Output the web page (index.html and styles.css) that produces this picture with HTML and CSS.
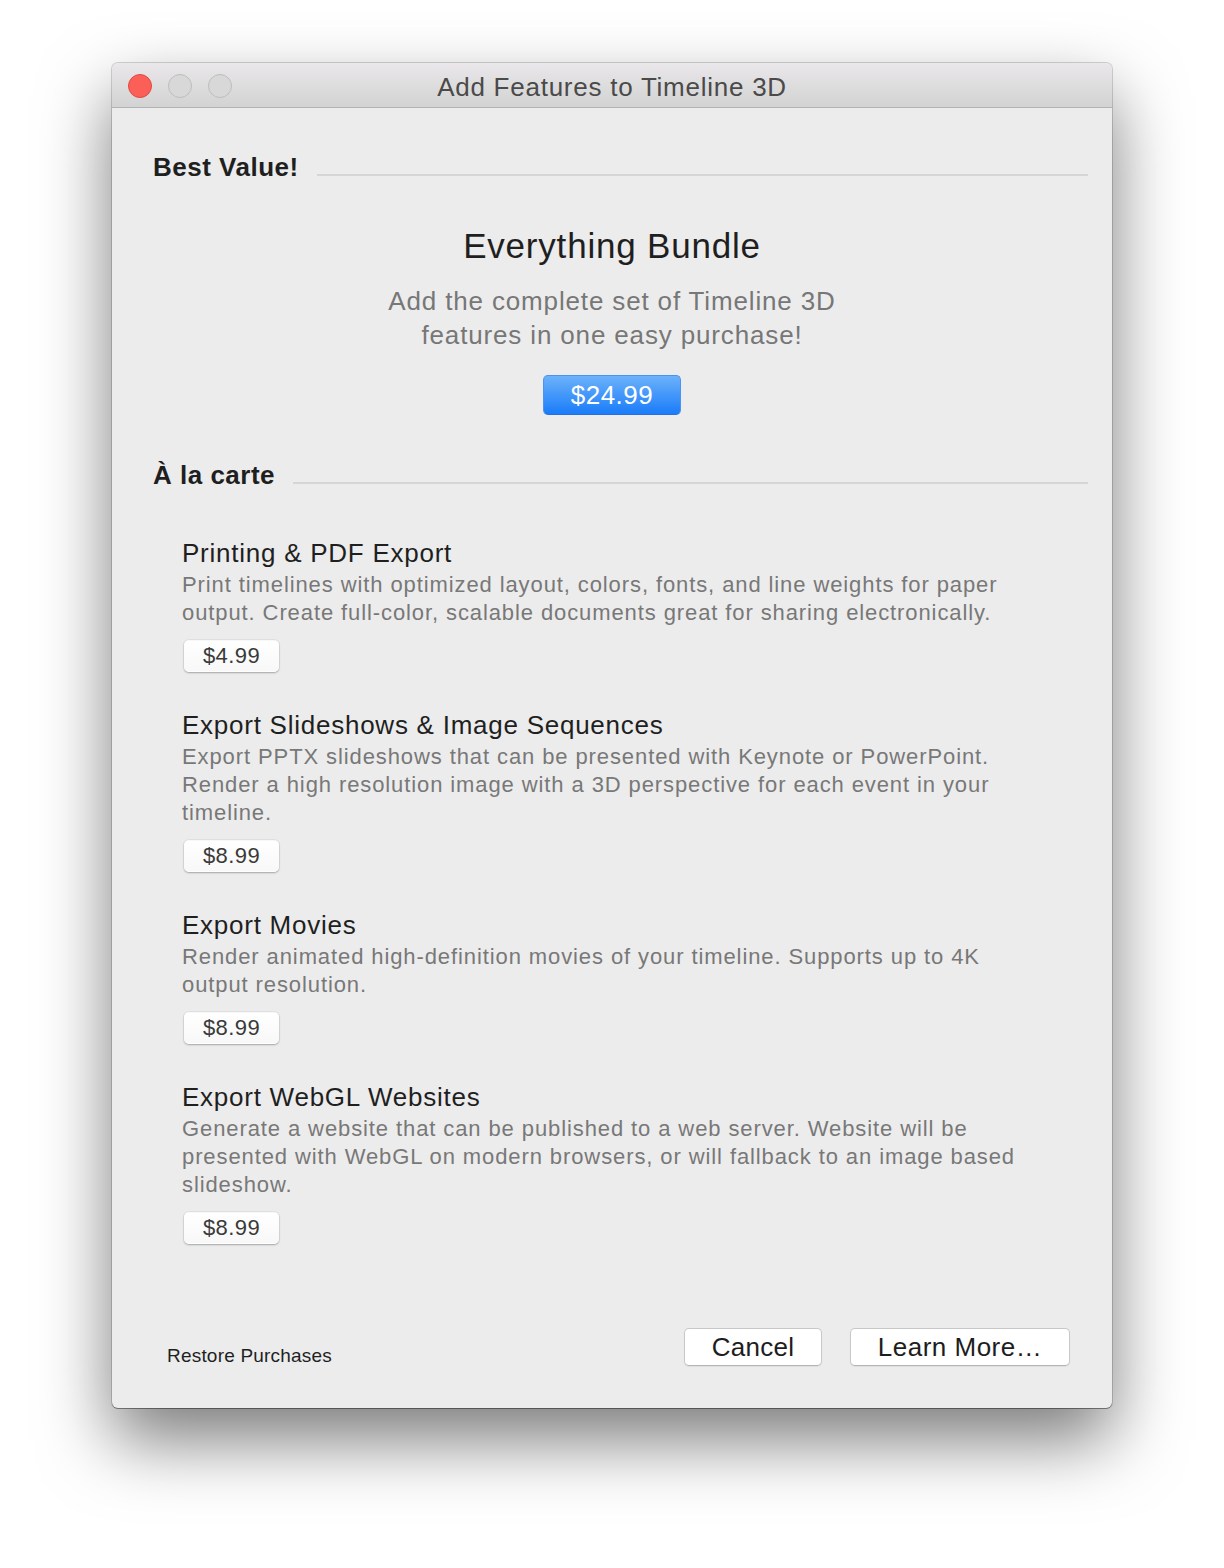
FILE: index.html
```html
<!DOCTYPE html>
<html lang="en">
<head>
  <meta charset="UTF-8" />
  <meta name="viewport" content="width=device-width, initial-scale=1.0"/>
  <title>Add Features to Timeline 3D</title>
  <link rel="stylesheet" href="styles.css">
</head>
<body>

  <div class="window">
    <div class="titlebar">
      <div class="lights">
        <span class="light close"></span>
        <span class="light"></span>
        <span class="light"></span>
      </div>
      <div class="title">Add Features to Timeline 3D</div>
      <div></div>
    </div>

    <div class="content">
      <div class="section-head">
        <h2>Best Value!</h2>
        <span class="rule"></span>
      </div>

      <div class="bundle">
        <h1>Everything Bundle</h1>
        <p>Add the complete set of Timeline 3D features in one easy purchase!</p>
        <button class="buy-main">$24.99</button>
      </div>

      <div class="section-head carte">
        <h2>À la carte</h2>
        <span class="rule"></span>
      </div>

      <div class="items">
        <div class="item">
          <h3>Printing &amp; PDF Export</h3>
          <p>Print timelines with optimized layout, colors, fonts, and line weights for paper output. Create full-color, scalable documents great for sharing electronically.</p>
          <button class="price">$4.99</button>
        </div>
        <div class="item">
          <h3>Export Slideshows &amp; Image Sequences</h3>
          <p>Export PPTX slideshows that can be presented with Keynote or PowerPoint. Render a high resolution image with a 3D perspective for each event in your timeline.</p>
          <button class="price">$8.99</button>
        </div>
        <div class="item">
          <h3>Export Movies</h3>
          <p>Render animated high-definition movies of your timeline. Supports up to 4K output resolution.</p>
          <button class="price">$8.99</button>
        </div>
        <div class="item">
          <h3>Export WebGL Websites</h3>
          <p>Generate a website that can be published to a web server. Website will be presented with WebGL on modern browsers, or will fallback to an image based slideshow.</p>
          <button class="price">$8.99</button>
        </div>
      </div>

      <div class="footer">
        <span class="restore">Restore Purchases</span>
        <div class="actions">
          <button class="btn cancel">Cancel</button>
          <button class="btn learn">Learn More…</button>
        </div>
      </div>
    </div>
  </div>

</body>
</html>
```

FILE: styles.css
```css
body {
  margin: 0;
  padding: 63px 0 160px 112px;
  background: #fff;
  font-family: "Liberation Sans", Arial, sans-serif;
  color: #1f1f1f;
}

button {
  font-family: inherit;
  cursor: pointer;
}

.window {
  width: 1000px;
  height: 1345px;
  background: #ececec;
  border-radius: 6px;
  overflow: hidden;
  box-shadow: 0 0 0 1px rgba(0,0,0,0.16), 0 1px 0 rgba(0,0,0,0.3), 0 32px 70px rgba(0,0,0,0.52);
}

/* title bar */
.titlebar {
  display: grid;
  grid-template-columns: 1fr auto 1fr;
  align-items: center;
  height: 44px;
  background: linear-gradient(#e9e7e9, #d3d3d3);
  border-bottom: 1px solid #b2b2b2;
}

.lights {
  display: flex;
  gap: 16px;
  padding-left: 16px;
}

.light {
  width: 22px;
  height: 22px;
  border-radius: 50%;
  background: #d8d8d8;
  border: 1px solid #bdbdbd;
}

.light.close {
  background: #fc5f57;
  border-color: #df4a44;
}

.title {
  font-size: 26px;
  letter-spacing: 0.75px;
  color: #4a4a4a;
  line-height: 44px;
  padding-top: 2px;
}

/* body */
.content {
  padding: 43px 24px 0 24px;
}

.section-head {
  display: flex;
  align-items: flex-end;
  gap: 18px;
  padding-left: 17px;
}

.section-head h2 {
  margin: 0;
  font-size: 26px;
  line-height: 32px;
  font-weight: bold;
  letter-spacing: 0.5px;
  color: #1f1f1f;
}

.rule {
  flex: 1;
  height: 2px;
  margin-bottom: 7px;
  background: #d6d6d6;
}

.bundle {
  text-align: center;
}

.bundle h1 {
  margin: 42px 0 0;
  font-size: 35px;
  line-height: 42px;
  font-weight: normal;
  letter-spacing: 0.8px;
  color: #1f1f1f;
}

.bundle p {
  max-width: 480px;
  margin: 17px auto 0;
  font-size: 26px;
  line-height: 34px;
  letter-spacing: 0.85px;
  color: #777;
}

.buy-main {
  width: 138px;
  height: 40px;
  margin-top: 23px;
  padding: 0;
  font-size: 26px;
  line-height: 38px;
  letter-spacing: 0.5px;
  color: #fff;
  background: linear-gradient(#6cb2fa, #1a7cf9);
  border: 1px solid #4c92f2;
  border-bottom-color: #2a6fe2;
  border-radius: 5px;
}

.carte {
  margin-top: 44px;
}

/* items */
.items {
  display: flex;
  flex-direction: column;
  gap: 37px;
  margin-top: 46px;
  padding-left: 46px;
}

.item h3 {
  margin: 0;
  font-size: 26px;
  line-height: 32px;
  font-weight: normal;
  letter-spacing: 0.75px;
  color: #1f1f1f;
}

.item p {
  max-width: 850px;
  margin: 2px 0 0;
  font-size: 22px;
  line-height: 28px;
  letter-spacing: 0.9px;
  color: #787878;
}

.price {
  display: block;
  width: 95px;
  height: 32px;
  margin: 13px 0 0 2px;
  padding: 0;
  font-size: 22px;
  line-height: 30px;
  letter-spacing: 0.4px;
  color: #3a3a3a;
  background: linear-gradient(#ffffff, #f8f8f8);
  border: 1px solid transparent;
  border-radius: 5px;
  box-shadow: 0 0 0 1px rgba(0,0,0,0.04), 0 1px 2px rgba(0,0,0,0.28);
}

/* footer */
.footer {
  display: flex;
  justify-content: space-between;
  align-items: flex-end;
  margin-top: 84px;
  padding: 0 18px 0 31px;
}

.restore {
  font-size: 19px;
  line-height: 24px;
  letter-spacing: 0.2px;
  margin-bottom: -2px;
  color: #1f1f1f;
}

.actions {
  display: flex;
  gap: 28px;
}

.btn {
  height: 38px;
  padding: 0;
  font-size: 26px;
  line-height: 36px;
  color: #1d1d1d;
  background: #fff;
  border: 1px solid #c8c8c8;
  border-bottom-color: #b4b4b4;
  border-radius: 5px;
  box-shadow: 0 1px 1px rgba(0,0,0,0.06);
}

.cancel {
  width: 138px;
  letter-spacing: 0.3px;
}

.learn {
  width: 220px;
  letter-spacing: 0.5px;
}
```
